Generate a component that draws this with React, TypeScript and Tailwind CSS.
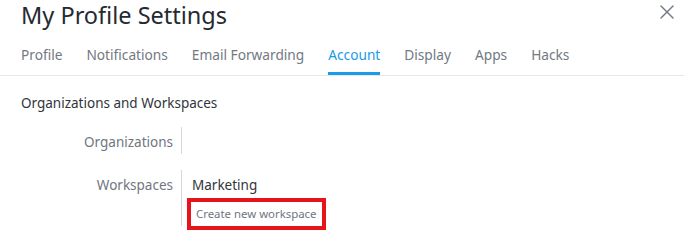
import { X } from "lucide-react";

const tabs = ["Profile", "Notifications", "Email Forwarding", "Account", "Display", "Apps", "Hacks"];

export default function App() {
  return (
    <div className="relative h-[237px] w-[684px] overflow-hidden bg-white font-['Noto_Sans',sans-serif]">
      <div className="flex items-start justify-between pl-[21px] pr-[5px]">
        <h1 className="text-[23.5px] leading-[30px] text-[#252a31]">My Profile Settings</h1>
        <button className="text-[#737982]">
          <X size={24} strokeWidth={1.4} />
        </button>
      </div>

      <nav className="mt-[15px] flex gap-[24px] border-b border-[#e6e8eb] px-[21px]">
        {tabs.map((t) => (
          <span
            key={t}
            className={
              t === "Account"
                ? "border-b-[3px] border-[#1a9be6] pb-[7px] text-[13.7px] leading-[20px] text-[#1a9be6]"
                : "border-b-[3px] border-transparent pb-[7px] text-[13.7px] leading-[20px] text-[#727983]"
            }
          >
            {t}
          </span>
        ))}
      </nav>

      <section className="px-[21px] pt-[17px]">
        <h2 className="text-[13.5px] leading-[20px] text-[#30353c]">Organizations and Workspaces</h2>

        <div className="mt-[14px] grid grid-cols-[160px_1fr] gap-y-[16px]">
          <div className="pr-[8px] pt-[5px] text-right text-[13.5px] leading-[20px] text-[#6f7680]">Organizations</div>
          <div className="h-[27px] border-l border-[#d5d8dc]" />

          <div className="pr-[8px] pt-[5px] text-right text-[13.5px] leading-[20px] text-[#6f7680]">Workspaces</div>
          <div className="-mb-[2px] flex flex-col items-start border-l border-[#d5d8dc] pl-[9px] pt-[5px]">
            <span className="pl-[1px] text-[13.5px] leading-[20px] text-[#30353c]">Marketing</span>
            <a className="mt-[7px] inline-block px-[5px] text-[11.4px] leading-[24px] text-[#6f7680] outline-[4px] outline-solid outline-[#e8141c]">
              Create new workspace
            </a>
          </div>
        </div>
      </section>
    </div>
  );
}
